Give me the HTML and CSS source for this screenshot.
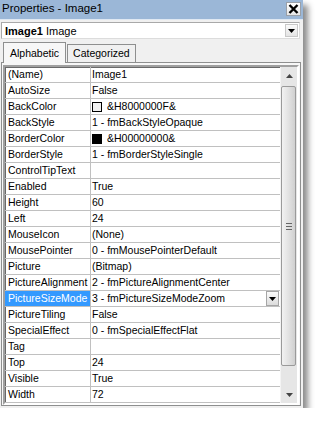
FILE: index.html
```html
<!DOCTYPE html>
<html>
<head>
<meta charset="utf-8">
<link rel="stylesheet" href="styles.css">
</head>
<body>
<div class="window">
  <div class="titlebar">
    <span class="title">Properties - Image1</span>
    <span class="close"><svg width="11" height="10" viewBox="0 0 11 10"><path d="M1.5 1 L9.5 9 M9.5 1 L1.5 9" stroke="#000" stroke-width="2.4" fill="none"/></svg></span>
  </div>
  <div class="combo">
    <span class="combo-text"><b>Image1</b> Image</span>
    <span class="combo-btn"><svg width="7" height="4" viewBox="0 0 7 4"><path d="M0 0 H7 L3.5 4 Z" fill="#000"/></svg></span>
  </div>
  <div class="tabs">
    <div class="tab active">Alphabetic</div>
    <div class="tab">Categorized</div>
  </div>
  <div class="panel">
    <div class="frame">
      <div class="grid">
        <div class="row"><div class="name">(Name)</div><div class="val">Image1</div></div>
        <div class="row"><div class="name">AutoSize</div><div class="val">False</div></div>
        <div class="row"><div class="name">BackColor</div><div class="val"><span class="swatch light"></span>&amp;H8000000F&amp;</div></div>
        <div class="row"><div class="name">BackStyle</div><div class="val">1 - fmBackStyleOpaque</div></div>
        <div class="row"><div class="name">BorderColor</div><div class="val"><span class="swatch dark"></span>&amp;H00000000&amp;</div></div>
        <div class="row"><div class="name">BorderStyle</div><div class="val">1 - fmBorderStyleSingle</div></div>
        <div class="row"><div class="name">ControlTipText</div><div class="val"></div></div>
        <div class="row"><div class="name">Enabled</div><div class="val">True</div></div>
        <div class="row"><div class="name">Height</div><div class="val">60</div></div>
        <div class="row"><div class="name">Left</div><div class="val">24</div></div>
        <div class="row"><div class="name">MouseIcon</div><div class="val">(None)</div></div>
        <div class="row"><div class="name">MousePointer</div><div class="val">0 - fmMousePointerDefault</div></div>
        <div class="row"><div class="name">Picture</div><div class="val">(Bitmap)</div></div>
        <div class="row"><div class="name">PictureAlignment</div><div class="val">2 - fmPictureAlignmentCenter</div></div>
        <div class="row selected"><div class="name">PictureSizeMode</div><div class="val"><span class="val-text">3 - fmPictureSizeModeZoom</span><span class="drop"><svg width="7" height="4" viewBox="0 0 7 4"><path d="M0 0 H7 L3.5 4 Z" fill="#000"/></svg></span></div></div>
        <div class="row"><div class="name">PictureTiling</div><div class="val">False</div></div>
        <div class="row"><div class="name">SpecialEffect</div><div class="val">0 - fmSpecialEffectFlat</div></div>
        <div class="row"><div class="name">Tag</div><div class="val"></div></div>
        <div class="row"><div class="name">Top</div><div class="val">24</div></div>
        <div class="row"><div class="name">Visible</div><div class="val">True</div></div>
        <div class="row"><div class="name">Width</div><div class="val">72</div></div>
      </div>
      <div class="scrollbar">
        <div class="sb-btn"><svg width="7" height="4" viewBox="0 0 7 4"><path d="M0 4 H7 L3.5 0 Z" fill="#444"/></svg></div>
        <div class="sb-track">
          <div class="thumb">
            <span class="grip"></span><span class="grip"></span><span class="grip"></span>
          </div>
        </div>
        <div class="sb-btn"><svg width="7" height="4" viewBox="0 0 7 4"><path d="M0 0 H7 L3.5 4 Z" fill="#444"/></svg></div>
      </div>
    </div>
  </div>
</div>
</body>
</html>
```

FILE: styles.css
```css
html, body {
  margin: 0;
  padding: 0;
  background: #ffffff;
}
body {
  font-family: "Liberation Sans", Arial, sans-serif;
  font-size: 10.5px;
  color: #000;
}
.window {
  width: 303px;
  height: 408px;
  box-sizing: border-box;
  background: #f0f0f0;
  box-shadow: 5px 5px 6px rgba(0, 0, 0, 0.45);
  display: flex;
  flex-direction: column;
}
.titlebar {
  height: 19px;
  background: #9bb7d7;
  display: flex;
  align-items: center;
  justify-content: space-between;
  padding: 0 2px 0 2px;
  border-bottom: 1px solid #dfe8f2;
}
.title {
  font-size: 11.5px;
  line-height: 15px;
  margin-top: -3px;
}
.close {
  width: 13px;
  height: 12px;
  background: linear-gradient(#ffffff, #e6e6e6);
  border: 1px solid #9aa0a8;
  display: flex;
  align-items: center;
  justify-content: center;
  margin-top: -2px;
}
.combo {
  margin: 2px 3px 0 1px;
  height: 15px;
  background: #fff;
  border: 1px solid #a9a9a9;
  border-right-color: #dcdcdc;
  border-bottom-color: #dcdcdc;
  display: flex;
  align-items: center;
  justify-content: space-between;
}
.combo-text {
  padding-left: 3px;
  font-size: 11px;
}
.combo-text b {
  font-weight: bold;
}
.combo-btn {
  width: 11px;
  height: 11px;
  margin-right: 1px;
  background: linear-gradient(#fafafa, #e4e4e4);
  border: 1px solid #c8c8c8;
  display: flex;
  align-items: center;
  justify-content: center;
}
.tabs {
  display: flex;
  align-items: flex-end;
  margin-top: 3px;
  padding-left: 3px;
  height: 20px;
}
.tab {
  height: 17px;
  padding: 0 5px;
  line-height: 17px;
  font-size: 10.5px;
  border: 1px solid #8e8f8f;
  border-bottom: none;
  background: #f0f0f0;
  margin-left: 1px;
}
.tab.active {
  height: 20px;
  line-height: 20px;
  padding: 0 6px;
  margin-left: 0;
  background: #f7f7f7;
  position: relative;
  z-index: 1;
  margin-bottom: -1px;
}
.panel {
  margin: 0 2px 0 1px;
  border: 1px solid #8e8f8f;
  padding: 2px 1px 1px 1px;
  height: 339px;
  background: #f7f7f7;
}
.frame {
  border: 2px solid;
  border-color: #a0a0a0 #ffffff #ffffff #a0a0a0;
  box-shadow: inset 1px 1px 0 #696969;
  display: flex;
  background: #fff;
  height: 336px;
}
.grid {
  width: 276px;
  display: flex;
  flex-direction: column;
}
.row {
  display: flex;
  height: 15px;
  border-bottom: 1px solid #c0c0c0;
  line-height: 15px;
  white-space: nowrap;
}
.name {
  width: 82px;
  padding-left: 3px;
  border-right: 1px solid #c0c0c0;
  overflow: hidden;
}
.val {
  flex: 1;
  padding-left: 1px;
  display: flex;
  align-items: center;
}
.selected .name {
  background: #3399ff;
  color: #fff;
}
.val-text {
  flex: 1;
}
.drop {
  width: 11px;
  height: 13px;
  margin-right: 1px;
  background: linear-gradient(#fbfbfb, #dcdcdc);
  border: 1px solid #a6a6a6;
  display: flex;
  align-items: center;
  justify-content: center;
}
.swatch {
  width: 10px;
  height: 10px;
  border: 1px solid #000;
  margin-right: 5px;
  margin-left: 0;
  box-sizing: border-box;
}
.swatch.light {
  background: #f0f0f0;
}
.swatch.dark {
  background: #000;
}
.scrollbar {
  width: 16px;
  display: flex;
  flex-direction: column;
  background: #e6e6e6;
  border-left: 1px solid #f4f4f4;
}
.sb-btn {
  height: 17px;
  display: flex;
  align-items: center;
  justify-content: center;
  background: #e6e6e6;
}
.sb-track {
  flex: 1;
  display: flex;
  flex-direction: column;
  padding: 2px 0 17px 0;
}
.thumb {
  height: 280px;
  margin: 0 1px 0 0;
  box-sizing: border-box;
  border: 1px solid #9a9a9a;
  border-radius: 2px;
  background: linear-gradient(to right, #f2f2f2, #e2e2e2 50%, #d0d0d0);
  display: flex;
  flex-direction: column;
  align-items: center;
  justify-content: center;
  gap: 2px;
}
.grip {
  width: 6px;
  height: 1px;
  background: #666;
}
```
